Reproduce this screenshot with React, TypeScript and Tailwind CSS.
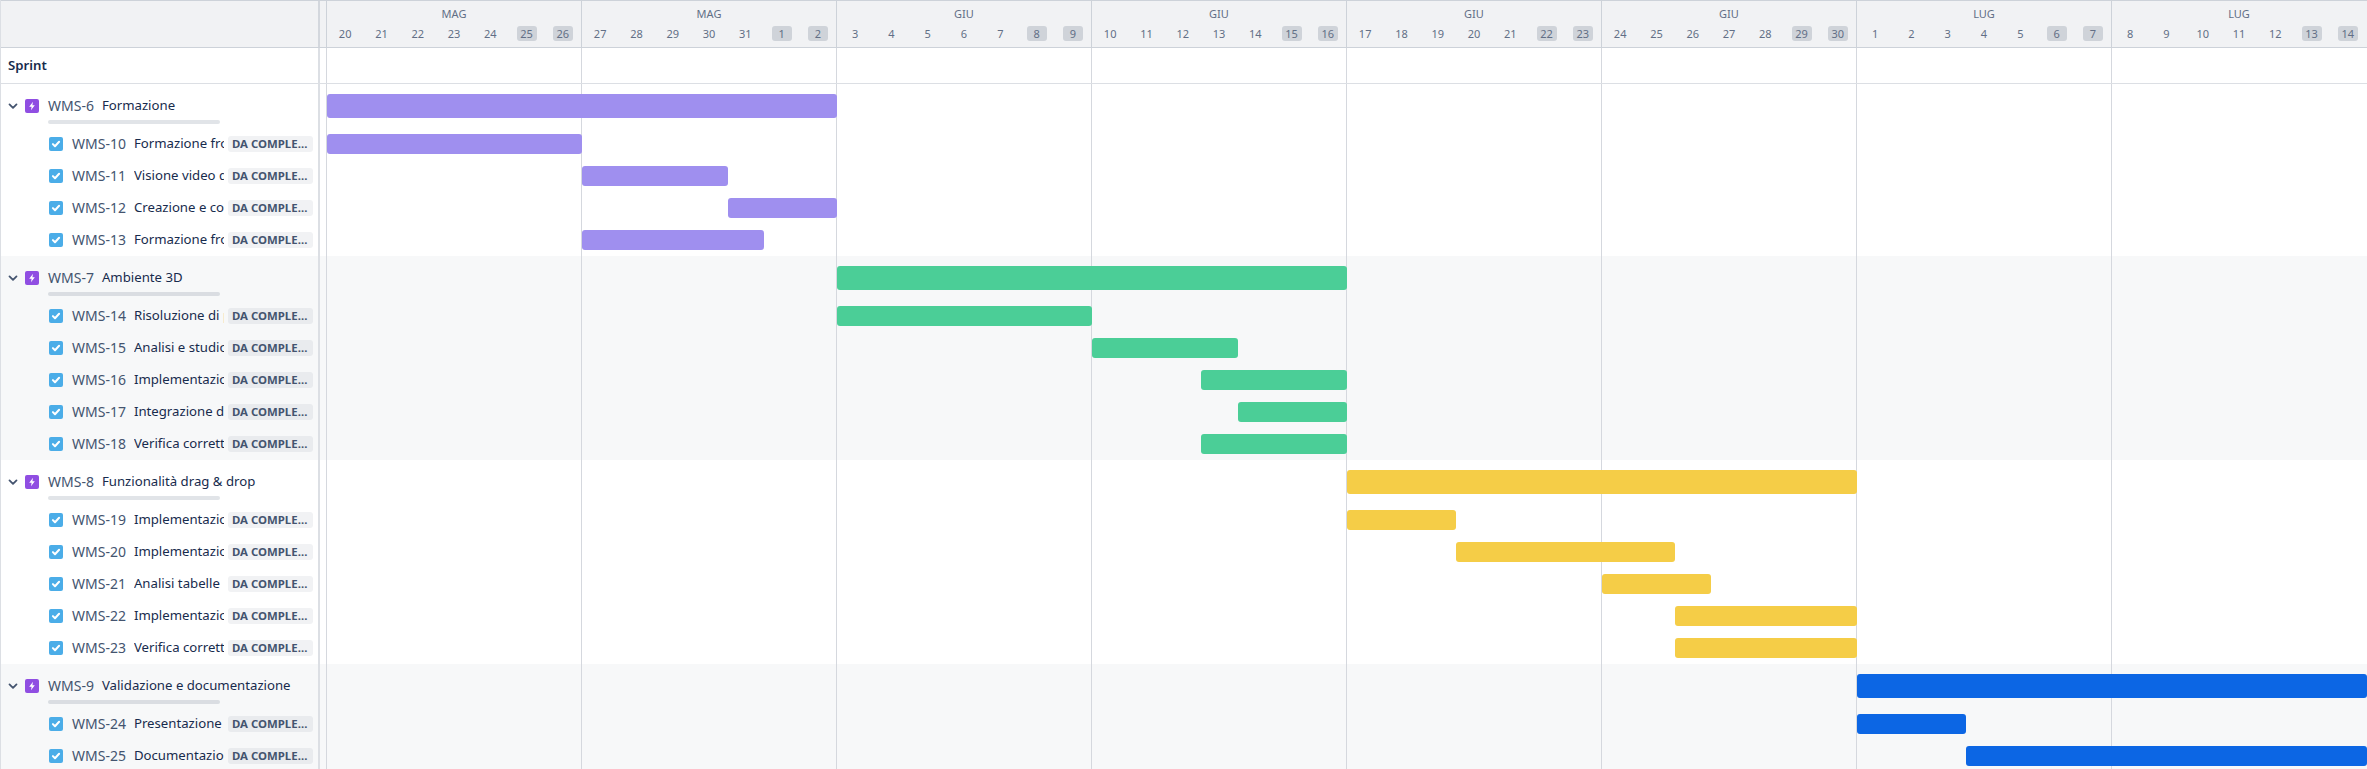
const MONTHS = ["MAG", "MAG", "GIU", "GIU", "GIU", "GIU", "LUG", "LUG"];

type Task = { key: string; title: string; from: number; to: number };
type Epic = { key: string; title: string; from: number; to: number; color: string; tasks: Task[] };

const EPICS: Epic[] = [
  {
    key: "WMS-6", title: "Formazione", from: 0, to: 14, color: "#9f8fef",
    tasks: [
      { key: "WMS-10", title: "Formazione frontend sul framework", from: 0, to: 7 },
      { key: "WMS-11", title: "Visione video di formazione", from: 7, to: 11 },
      { key: "WMS-12", title: "Creazione e configurazione", from: 11, to: 14 },
      { key: "WMS-13", title: "Formazione frontend avanzata", from: 7, to: 12 },
    ],
  },
  {
    key: "WMS-7", title: "Ambiente 3D", from: 14, to: 28, color: "#4bce97",
    tasks: [
      { key: "WMS-14", title: "Risoluzione di problemi", from: 14, to: 21 },
      { key: "WMS-15", title: "Analisi e studio", from: 21, to: 25 },
      { key: "WMS-16", title: "Implementazione scena", from: 24, to: 28 },
      { key: "WMS-17", title: "Integrazione del modello", from: 25, to: 28 },
      { key: "WMS-18", title: "Verifica correttezza", from: 24, to: 28 },
    ],
  },
  {
    key: "WMS-8", title: "Funzionalità drag & drop", from: 28, to: 42, color: "#f5cd47",
    tasks: [
      { key: "WMS-19", title: "Implementazione drag", from: 28, to: 31 },
      { key: "WMS-20", title: "Implementazione drop", from: 31, to: 37 },
      { key: "WMS-21", title: "Analisi tabelle", from: 35, to: 38 },
      { key: "WMS-22", title: "Implementazione tabelle", from: 37, to: 42 },
      { key: "WMS-23", title: "Verifica correttezza", from: 37, to: 42 },
    ],
  },
  {
    key: "WMS-9", title: "Validazione e documentazione", from: 42, to: 56, color: "#0c66e4",
    tasks: [
      { key: "WMS-24", title: "Presentazione finale", from: 42, to: 45 },
      { key: "WMS-25", title: "Documentazione finale", from: 45, to: 56 },
    ],
  },
];

// days start on 20 May, 56 of them
function dayLabels() {
  const out: number[] = [];
  for (let i = 0; i < 56; i++) {
    if (i < 12) out.push(20 + i);
    else if (i < 42) out.push(i - 11);
    else out.push(i - 41);
  }
  return out;
}

function WeekCells() {
  return (
    <>
      {MONTHS.map((_, i) => (
        <div
          key={i}
          className="row-start-1 border-l border-[#d5d8de]"
          style={{ gridColumn: `${i * 7 + 1} / span 7` }}
        />
      ))}
    </>
  );
}

function Bar({ from, to, color, tall }: { from: number; to: number; color: string; tall?: boolean }) {
  return (
    <div
      className={`row-start-1 self-center ml-px -mr-px rounded-[3px] ${tall ? "h-6" : "h-5"}`}
      style={{ gridColumn: `${from + 1} / ${to + 1}`, backgroundColor: color }}
    />
  );
}

function EpicIcon() {
  return (
    <svg width="14" height="14" viewBox="0 0 14 14" className="shrink-0">
      <rect width="14" height="14" rx="2" fill="#904ee2" />
      <path d="M8 2.8 4.2 7.8h2.4l-.6 3.4 3.8-5H7.4z" fill="#fff" />
    </svg>
  );
}

function TaskIcon() {
  return (
    <svg width="14" height="14" viewBox="0 0 14 14" className="shrink-0">
      <rect width="14" height="14" rx="2" fill="#4bade8" />
      <path d="M3.9 7.1 6 9.2l4.1-4.4" fill="none" stroke="#fff" strokeWidth="2" strokeLinecap="round" strokeLinejoin="round" />
    </svg>
  );
}

function EpicRow({ epic }: { epic: Epic }) {
  return (
    <div className="flex h-11">
      <div className="relative flex w-[319px] shrink-0 items-center border-r-2 border-[#dcdfe4] pl-[7px] pr-1">
        <svg width="10" height="10" viewBox="0 0 10 10" className="mr-[7px] shrink-0">
          <path d="M1.5 3.4 5 6.8l3.5-3.4" fill="none" stroke="#44546f" strokeWidth="1.8" strokeLinecap="round" strokeLinejoin="round" />
        </svg>
        <EpicIcon />
        <span className="ml-[9px] text-sm text-[#44546f]">{epic.key}</span>
        <span className="ml-2 whitespace-nowrap">{epic.title}</span>
        <div className="absolute bottom-1 left-[47px] h-1 w-[172px] rounded-sm bg-[#091e421f]" />
      </div>
      <div className="ml-[6px] grid w-[2040px] grid-cols-[repeat(56,minmax(0,1fr))]">
        <WeekCells />
        <Bar from={epic.from} to={epic.to} color={epic.color} tall />
      </div>
    </div>
  );
}

function TaskRow({ task, color }: { task: Task; color: string }) {
  return (
    <div className="flex h-8">
      <div className="flex w-[319px] shrink-0 items-center border-r-2 border-[#dcdfe4] pl-[48px] pr-[5px]">
        <TaskIcon />
        <span className="ml-[9px] shrink-0 text-sm text-[#44546f]">{task.key}</span>
        <span className="ml-2 min-w-0 flex-1 overflow-hidden whitespace-nowrap">{task.title}</span>
        <span className="ml-1 w-[85px] shrink-0 overflow-hidden rounded-[3px] bg-[#091e420f] px-1 text-[11.4px] leading-4 font-bold text-ellipsis whitespace-nowrap text-[#44546f]">
          DA COMPLETARE
        </span>
      </div>
      <div className="ml-[6px] grid w-[2040px] grid-cols-[repeat(56,minmax(0,1fr))]">
        <WeekCells />
        <Bar from={task.from} to={task.to} color={color} />
      </div>
    </div>
  );
}

export default function App() {
  const days = dayLabels();
  return (
    <div className="h-[769px] w-[2367px] overflow-hidden border-l border-[#dcdfe4] bg-white font-['Noto_Sans','Open_Sans',sans-serif] text-[13.2px] text-[#172b4d]">
      {/* header */}
      <div className="flex h-12 border-y border-[#cdd2d9] bg-[#f1f2f4]">
        <div className="w-[319px] shrink-0 border-r-2 border-[#d3d7dd]" />
        <div className="ml-[6px] grid w-[2040px] grid-cols-8">
          {MONTHS.map((month, w) => (
            <div key={w} className="flex flex-col border-l border-[#cdd2d9]">
              <div className="pt-[5px] text-center text-[11px] leading-[15px] text-[#626f86]">{month}</div>
              <div className="mt-[5px] grid grid-cols-7 justify-items-center text-[11px] text-[#626f86]">
                {days.slice(w * 7, w * 7 + 7).map((d, i) => (
                  <span key={i} className={`h-[15px] w-5 rounded-[3px] text-center leading-[15px] ${i > 4 ? "bg-[#cfd3d9]" : ""}`}>
                    {d}
                  </span>
                ))}
              </div>
            </div>
          ))}
        </div>
      </div>

      {/* sprint row */}
      <div className="flex h-9 border-b border-[#dcdfe4]">
        <div className="flex w-[319px] shrink-0 items-center border-r-2 border-[#dcdfe4] pl-[7px] font-semibold">Sprint</div>
        <div className="ml-[6px] grid w-[2040px] grid-cols-[repeat(56,minmax(0,1fr))]">
          <WeekCells />
        </div>
      </div>

      {EPICS.map((epic, i) => (
        <div key={epic.key} className={i % 2 === 1 ? "bg-[#f7f8f9]" : ""}>
          <EpicRow epic={epic} />
          {epic.tasks.map((task) => (
            <TaskRow key={task.key} task={task} color={epic.color} />
          ))}
        </div>
      ))}
    </div>
  );
}
